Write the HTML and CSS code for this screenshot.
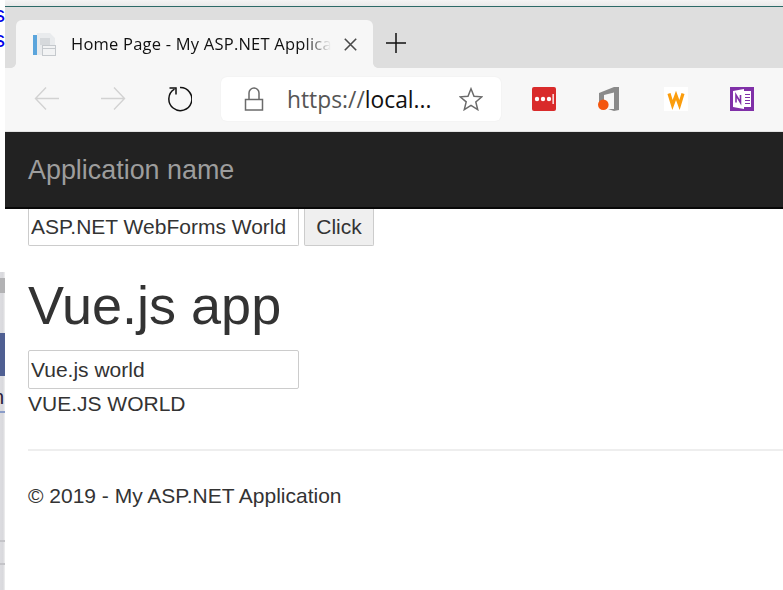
FILE: index.html
```html
<!DOCTYPE html>
<html lang="en">
<head>
<meta charset="utf-8">
<title>Home Page - My ASP.NET Application</title>
<link rel="stylesheet" href="styles.css">
</head>
<body>
<div class="desktop">
  <div class="strip">
    <span class="strip-s first">s</span>
    <span class="strip-s second">s</span>
    <span class="strip-gray"></span>
    <span class="strip-blue"></span>
    <span class="strip-n">n</span>
    <span class="strip-line"></span>
    <span class="strip-rule one"></span>
    <span class="strip-rule two"></span>
  </div>
  <div class="window">
    <div class="titlebar">
      <div class="tab">
        <svg class="favicon" width="24" height="24" viewBox="0 0 24 24">
          <rect x="1" y="3" width="4" height="20" fill="#5ba5dc"/>
          <path d="M5 1h13l5 5v7H18v10H5z" fill="#e9ebed"/>
          <rect x="8" y="6" width="10" height="7" fill="#d6d9dc"/>
          <rect x="10.500" y="13.500" width="13" height="10" fill="#f2f3f4" stroke="#c5c9cd"/>
          <rect x="10.500" y="16" width="13" height="1" fill="#c5c9cd"/>
        </svg>
        <span class="tab-title">Home Page - My ASP.NET Application</span>
        <svg class="tab-close" width="13" height="13" viewBox="0 0 13 13"><path d="M.8.8l11.400 11.400M12.200.8L.8 12.200" stroke="#4a4a4a" stroke-width="1.600" fill="none"/></svg>
      </div>
      <svg class="newtab" width="20" height="20" viewBox="0 0 20 20"><path d="M10 0v20M0 10h20" stroke="#111" stroke-width="1.500" fill="none"/></svg>
    </div>
    <div class="toolbar">
      <svg class="nav back" width="26" height="24" viewBox="0 0 26 24"><path d="M25 11.500H2M12 .5L1.500 11.500 12 22.500" stroke="#d2d2d2" stroke-width="1.400" fill="none"/></svg>
      <svg class="nav forward" width="26" height="24" viewBox="0 0 26 24"><path d="M1 11.500h23M14 .5l10.500 11L14 22.500" stroke="#d2d2d2" stroke-width="1.400" fill="none"/></svg>
      <svg class="nav reload" width="26" height="26" viewBox="0 0 26 26"><path d="M8.500 3.200A11.500 11.500 0 1 0 14 1.600" stroke="#111" stroke-width="1.500" fill="none"/><path d="M3.500 2H10V8.500" stroke="#111" stroke-width="1.500" fill="none"/></svg>
      <div class="address">
        <svg class="lock" width="20" height="24" viewBox="0 0 20 24"><rect x="1.500" y="12.500" width="17" height="10.500" fill="none" stroke="#6b6b6b" stroke-width="1.500"/><path d="M5 12.500V6a5 5 0 0 1 10 0v6.500" fill="none" stroke="#6b6b6b" stroke-width="1.500"/></svg>
        <span class="url"><span class="scheme">https://</span>local...</span>
        <svg class="star" width="24" height="24" viewBox="0 0 24 24"><path d="M12 1.800l3 7.400 7.900.6-6.100 5.100 1.900 7.700L12 18.400l-6.700 4.200 1.900-7.700L1.100 9.800 9 9.200z" fill="none" stroke="#6b6b6b" stroke-width="1.500"/></svg>
      </div>
      <div class="extensions">
        <svg width="24" height="24" viewBox="0 0 24 24"><rect width="24" height="24" rx="2" fill="#d92b2b"/><circle cx="5" cy="12" r="2.200" fill="#fff"/><circle cx="11" cy="12" r="2.200" fill="#fff"/><circle cx="17" cy="12" r="2.200" fill="#fff"/><rect x="20.500" y="7" width="1.300" height="10" fill="#fff"/></svg>
        <svg width="24" height="24" viewBox="0 0 24 24"><path d="M1 6L16 0h5v23l-5 1-6-2h6V5.500L6 8v7l-5 1z" fill="#8a8a8a"/><circle cx="5.300" cy="17.700" r="5.300" fill="#f4560e"/></svg>
        <svg width="24" height="24" viewBox="0 0 24 24"><rect width="24" height="24" fill="#fff"/><path d="M5 6.500L8.500 18 12 8.500 15.500 18 19 6.500" fill="none" stroke="#fb9d0d" stroke-width="3.200"/></svg>
        <svg width="24" height="24" viewBox="0 0 24 24"><rect width="24" height="24" fill="#8030a8"/><rect x="12" y="4" width="9" height="16" fill="#fff"/><path d="M15 7.500h5M15 10.500h5M15 13.500h5M15 16.500h5" stroke="#8030a8" stroke-width="1"/><path d="M3 4l11-2v20L3 20z" fill="#fff"/><path d="M6 15.500V8l4.500 7.500V8" fill="none" stroke="#8030a8" stroke-width="1.600"/></svg>
      </div>
    </div>
    <nav class="navbar"><a class="brand">Application name</a></nav>
    <main class="content">
      <form class="form-row">
        <input class="field" type="text" value="ASP.NET WebForms World">
        <button class="btn" type="button">Click</button>
      </form>
      <h1 class="heading">Vue.js app</h1>
      <input class="field vue-field" type="text" value="Vue.js world">
      <div class="upper">VUE.JS WORLD</div>
      <hr class="rule">
      <footer class="footer">© 2019 - My ASP.NET Application</footer>
    </main>
  </div>
</div>
</body>
</html>
```
FILE: styles.css
```css
* { box-sizing: border-box; }
html, body { margin: 0; height: 100%; overflow: hidden; }
body { background: #fff; font-family: "Liberation Sans", Arial, sans-serif; color: #333; }
.desktop { display: flex; width: 783px; height: 590px; }

.strip { position: relative; flex: 0 0 5px; width: 5px; height: 590px; background: linear-gradient(90deg, #dcdce0 0, #d8d8dc 3px, #f0f0f0 5px) 0 272px / 100% 318px no-repeat; overflow: hidden; }
.strip-s { position: absolute; left: -6px; font-size: 22px; line-height: 24px; color: #0000e8; }
.strip-s.first { top: 3px; }
.strip-s.second { top: 28px; }
.strip-gray { position: absolute; left: 0; top: 278px; width: 5px; height: 15px; background: #b2b2b4; }
.strip-blue { position: absolute; left: 0; top: 333px; width: 5px; height: 43px; background: #4f5f92; border-bottom: 0; }
.strip-n { position: absolute; left: -7px; top: 386px; font-size: 20px; line-height: 22px; color: #2a1a3a; }
.strip-line { position: absolute; left: 0; top: 411px; width: 5px; height: 2px; background: #8a9cc8; }
.strip-rule { position: absolute; left: 0; width: 5px; height: 2px; background: #c4c4c8; }
.strip-rule.one { top: 540px; }
.strip-rule.two { top: 563px; }

.window { flex: 1; min-width: 0; display: flex; flex-direction: column; background: linear-gradient(#f4f4f4, #e9e9e9) 0 0 / 100% 6px no-repeat; padding-top: 6px; }
.titlebar { flex: 0 0 62px; display: flex; align-items: flex-end; background: #dedede; border-top: 1px solid #2d6a68; padding-left: 11px; }
.tab { position: relative; width: 357px; height: 48px; display: flex; align-items: center; padding: 0 16px; background: #f7f7f7; border-radius: 6px 6px 0 0; }
.tab::before, .tab::after { content: ""; position: absolute; bottom: 0; width: 5px; height: 5px; }
.tab::before { left: -5px; background: radial-gradient(circle at 0 0, #dedede 4.500px, #f7f7f7 5.200px); }
.tab::after { right: -5px; background: radial-gradient(circle at 100% 0, #dedede 4.500px, #f7f7f7 5.200px); }
.favicon { flex: none; margin-right: 15px; }
.tab-title { flex: 1; min-width: 0; margin-top: -2px; white-space: nowrap; overflow: hidden; font-family: "Open Sans", sans-serif; font-size: 16.500px; letter-spacing: .22px; color: #111; -webkit-mask-image: linear-gradient(90deg, #000 90%, transparent 100%); mask-image: linear-gradient(90deg, #000 90%, transparent 100%); }
.tab-close { flex: none; margin-left: 13px; }
.newtab { flex: none; margin: 0 0 15px 13px; }

.toolbar { flex: 0 0 64px; display: flex; align-items: center; background: #f7f7f7; border-bottom: 1px solid #e3e3e3; padding-left: 29px; }
.nav { flex: none; margin-top: -1px; }
.back { margin-right: 40px; }
.forward { margin-right: 40px; }
.reload { margin-right: 29px; }
.address { flex: 0 0 280px; height: 44px; display: flex; align-items: center; margin-top: -1px; padding-left: 23px; background: #fff; border-radius: 6px; box-shadow: 0 0 2px rgba(0,0,0,.06); }
.lock { flex: none; margin-right: 23px; }
.url { flex: 1; font-family: "Open Sans", sans-serif; font-size: 22.800px; color: #111; white-space: nowrap; }
.scheme { color: #555; }
.star { flex: none; margin-right: 18px; }
.extensions { display: flex; gap: 42px; padding-left: 31px; margin-top: -1px; }

.navbar { flex: 0 0 77px; display: flex; align-items: center; padding: 1px 0 0 23px; background: #222; border-bottom: 2px solid #080808; }
.brand { font-size: 26.900px; color: #9d9d9d; }

.content { flex: 1; padding: 0 0 0 23px; font-size: 21px; line-height: 28px; }
.form-row { display: flex; gap: 5px; height: 37px; }
.field { width: 271px; height: 39px; padding: 0 2px; border: 1px solid #ccc; border-radius: 2px; background: #fff; font: 21px "Liberation Sans", Arial, sans-serif; color: #333; outline: none; display: block; }
.form-row .field { height: 37px; border-top: 0; border-radius: 0 0 2px 2px; }
.btn { width: 70px; height: 37px; padding: 0; border: 1px solid #ccc; border-top: 0; border-radius: 0 0 2px 2px; background: #efefef; font: 21px "Liberation Sans", Arial, sans-serif; color: #333; }
.heading { margin: 29px 0 0; font-size: 54px; line-height: 60px; font-weight: 400; color: #333; }
.vue-field { margin-top: 15px; }
.upper { height: 28px; line-height: 30px; }
.rule { margin: 32px 0 0; border: 0; border-top: 2px solid #eee; }
.footer { margin-top: 31px; }
```
